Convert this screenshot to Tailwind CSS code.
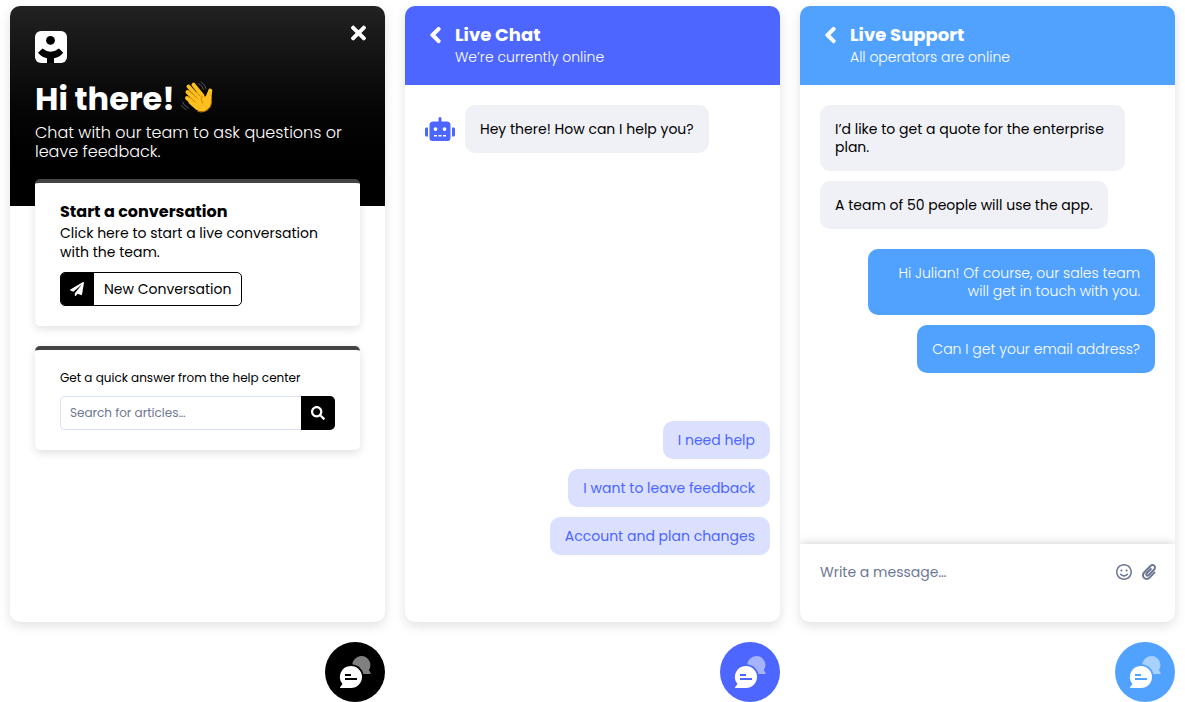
<!DOCTYPE html>
<html lang="en">
<head>
<meta charset="utf-8">
<meta name="viewport" content="width=device-width, initial-scale=1">
<title>Chat widgets</title>
<script src="https://cdn.jsdelivr.net/npm/@tailwindcss/browser@4"></script>
</head>
<body class="bg-white font-['Poppins','Inter',sans-serif] text-black">
<svg class="hidden" aria-hidden="true">
  <symbol id="chevron" viewBox="0 0 320 512"><path fill="currentColor" stroke="currentColor" stroke-width="34" stroke-linejoin="round" d="M34.52 239.03L228.87 44.69c9.37-9.37 24.57-9.37 33.94 0l22.67 22.67c9.36 9.36 9.37 24.52.04 33.9L131.49 256l154.02 154.75c9.34 9.38 9.32 24.54-.04 33.9l-22.67 22.67c-9.37 9.37-24.57 9.37-33.94 0L34.52 272.97c-9.37-9.37-9.37-24.57 0-33.94z"/></symbol>
  <symbol id="chat" viewBox="0 0 60 60">
    <path fill="#fff" fill-opacity=".5" d="M36.300 14a9 9 0 0 1 7.600 13.900l1.700 3.200c.2.500 0 .9-.5.900h-8.800a9 9 0 0 1 0-18z"/>
    <circle cx="26" cy="35" r="12.800" fill="currentColor"/>
    <path fill="#fff" d="M26 24a11 11 0 0 1 0 22H15.700c-.8 0-1-.6-.5-1.100l2.300-2.800A11 11 0 0 1 26 24z"/>
    <path stroke="currentColor" stroke-width="1.900" d="M20 33h6M20 37h12"/>
  </symbol>
</svg>
<main class="grid min-h-screen grid-cols-3 gap-5 px-2.5 pt-1.5">

  <div class="flex flex-col items-end gap-5">
    <section class="flex w-full flex-1 flex-col overflow-hidden rounded-[10px] bg-white shadow-[0_4px_12px_rgba(0,0,0,0.12)]">
      <header class="bg-linear-to-b from-[#222] to-black px-[25px] pt-[25px] pb-[45px] text-white">
        <div class="flex items-start justify-between">
          <svg class="size-8" viewBox="0 0 32 32" role="img" aria-label="Logo"><rect width="32" height="32" rx="6" fill="#fff"/><circle cx="15.500" cy="9.400" r="4.400" fill="#000"/><path fill="#000" d="M7.500 17.500Q15.500 24 24 17.500l4.200 4.300Q24.500 26.500 19 27.300V32h-7v-4.700Q7 26.500 3 21.800z"/></svg>
          <button type="button" aria-label="Close" class="-mt-1.5 -mr-1.5 flex h-4 w-4 items-center justify-center"><svg class="h-[22px] w-[15px] shrink-0" viewBox="0 0 352 512"><path fill="currentColor" d="M242.72 256l100.07-100.07c12.28-12.28 12.28-32.19 0-44.48l-22.24-22.24c-12.28-12.28-32.19-12.28-44.48 0L176 189.28 75.93 89.21c-12.28-12.28-32.19-12.28-44.48 0L9.21 111.45c-12.28 12.28-12.28 32.19 0 44.48L109.28 256 9.21 356.07c-12.28 12.28-12.28 32.19 0 44.48l22.24 22.24c12.28 12.28 32.2 12.28 44.48 0L176 322.72l100.07 100.07c12.28 12.28 32.2 12.28 44.48 0l22.24-22.24c12.28-12.28 12.28-32.19 0-44.48L242.72 256z"/></svg></button>
        </div>
        <h1 class="mt-[18px] flex h-9 items-center gap-1.5 text-[32px] leading-9 font-bold">Hi there!
          <svg class="mb-1 size-8" viewBox="0 0 32 32" role="img" aria-label="Waving hand">
            <g fill="none" stroke="#555" stroke-width="1" stroke-linecap="round"><path d="M17.500 2.500q4 1.500 5 6M20 1q4 2 5 6.500M1.500 21q1.500 4.500 6 6M.500 24.500q1.500 3 4.500 4"/></g>
            <g fill="none" stroke="#fcc11f" stroke-width="4" stroke-linecap="round"><path d="M6.500 11l9 9M7.500 5.500l10 11M12.500 3.700l9 11M6 17l9 8M29.300 9.500q-1.500 4-.8 8"/></g>
            <path fill="#fcbf1d" d="M9 17l8-8 6 6q1.500 1.500 2.300-1l2.200-5 3.700 1.500q-1 4-.7 9.500 0 5-3.700 8.300-6 4.500-12 .2L7.500 22z"/>
            <path fill="none" stroke="#c97a0a" stroke-width=".9" stroke-linecap="round" d="M8.500 9.500l7.500 7.700M12.500 8l6.500 7M7.500 15l6.500 6M21 15q-2 3 .5 7M17 30.500q7 2 11.500-3.500 2-3 2-7"/>
          </svg>
        </h1>
        <p class="mt-1.5 text-base leading-[19px] font-light">Chat with our team to ask questions or leave feedback.</p>
      </header>
      <div class="relative -mt-[27px] flex flex-col gap-5 px-[25px]">
        <article class="rounded-[5px] border-t-4 border-[#444] bg-white px-[25px] pt-[18px] pb-5 shadow-[0_3px_8px_rgba(0,0,0,0.12)]">
          <h2 class="text-base leading-[22px] font-bold">Start a conversation</h2>
          <p class="mt-px text-sm leading-[19px]">Click here to start a live conversation with the team.</p>
          <button type="button" class="mt-2.5 flex h-[34px] items-stretch overflow-hidden rounded-[5px] border border-black text-sm">
            <span class="flex w-[33px] items-center justify-center bg-black pr-0.5 text-white"><svg class="size-3.5" viewBox="0 0 512 512"><path fill="currentColor" d="M476 3.200L12.500 270.600c-18.100 10.400-15.800 35.600 2.200 43.200L121 358.400l287.300-253.200c5.500-4.900 13.300 2.600 8.600 8.300L176 407v80.500c0 23.600 28.500 32.900 42.500 15.800L282 426l124.600 52.200c14.200 6 30.400-2.900 33-18.200l72-432C515 7.800 493.300-6.800 476 3.200z"/></svg></span>
            <span class="flex items-center px-2.5">New Conversation</span>
          </button>
        </article>
        <article class="rounded-[5px] border-t-4 border-[#444] bg-white px-[25px] pt-[18px] pb-5 shadow-[0_3px_8px_rgba(0,0,0,0.12)]">
          <label for="q" class="block text-xs leading-5">Get a quick answer from the help center</label>
          <form class="mt-2 flex h-[34px]">
            <input id="q" type="search" placeholder="Search for articles…" class="min-w-0 flex-1 rounded-l-[5px] border border-r-0 border-[#dbe1fa] px-[9px] text-xs outline-none placeholder:text-[#6c7893]">
            <button type="button" aria-label="Search" class="flex w-[34px] items-center justify-center rounded-r-[5px] bg-black text-white"><svg class="size-3.5" viewBox="0 0 512 512"><path fill="currentColor" d="M505 442.700L405.300 343c-4.500-4.500-10.600-7-17-7H372c27.600-35.300 44-79.700 44-128C416 93.100 322.900 0 208 0S0 93.100 0 208s93.100 208 208 208c48.300 0 92.700-16.400 128-44v16.300c0 6.400 2.500 12.500 7 17l99.700 99.700c9.400 9.400 24.600 9.400 33.900 0l28.300-28.300c9.400-9.400 9.400-24.600.1-34zM208 336c-70.700 0-128-57.200-128-128 0-70.700 57.200-128 128-128 70.700 0 128 57.200 128 128 0 70.700-57.200 128-128 128z"/></svg></button>
          </form>
        </article>
      </div>
    </section>
    <button type="button" aria-label="Open chat" class="size-[60px] rounded-full bg-black text-black"><svg class="size-[60px]"><use href="#chat"/></svg></button>
  </div>

  <div class="flex flex-col items-end gap-5">
    <section class="flex w-full flex-1 flex-col overflow-hidden rounded-[10px] bg-white shadow-[0_4px_12px_rgba(0,0,0,0.12)]">
      <header class="flex gap-[13px] bg-[#4c66ff] px-6 pt-[18px] pb-[17px] text-white">
        <button type="button" aria-label="Back" class="flex h-[22px] w-[13px] items-center justify-center"><svg class="h-[18px] w-[13px] shrink-0"><use href="#chevron"/></svg></button>
        <div>
          <h2 class="text-lg leading-[22px] font-bold">Live Chat</h2>
          <p class="mt-px text-sm leading-[21px] font-light">We’re currently online</p>
        </div>
      </header>
      <div class="flex flex-1 flex-col justify-between pt-5 pr-2.5 pb-[67px] pl-5">
        <div class="flex items-center gap-2.5">
          <svg class="h-6 w-[30px] text-[#4c66ff]" viewBox="0 0 640 512" role="img" aria-label="Bot"><path fill="currentColor" d="M32,224H64V416H32A31.960,31.960,0,0,1,0,384V256A31.960,31.960,0,0,1,32,224Zm512-48V448a64.060,64.060,0,0,1-64,64H160a64.060,64.060,0,0,1-64-64V176a79.970,79.970,0,0,1,80-80H288V32a32,32,0,0,1,64,0V96H464A79.970,79.970,0,0,1,544,176ZM264,256a40,40,0,1,0-40,40A40,40,0,0,0,264,256Zm-8,128H192v32h64Zm96,0H288v32h64ZM456,256a40,40,0,1,0-40,40A40,40,0,0,0,456,256Zm-8,128H384v32h64ZM640,256V384a31.960,31.960,0,0,1-32,32H576V224h32A31.960,31.960,0,0,1,640,256Z"/></svg>
          <p class="rounded-[10px] bg-[#f0f1f6] p-[15px] text-sm leading-[18px]">Hey there! How can I help you?</p>
        </div>
        <div class="flex flex-col items-end gap-2.5 text-sm leading-[18px] text-[#4c66ff]">
          <button type="button" class="rounded-[10px] bg-[#dbe0ff] px-[15px] py-2.5">I need help</button>
          <button type="button" class="rounded-[10px] bg-[#dbe0ff] px-[15px] py-2.5">I want to leave feedback</button>
          <button type="button" class="rounded-[10px] bg-[#dbe0ff] px-[15px] py-2.5">Account and plan changes</button>
        </div>
      </div>
    </section>
    <button type="button" aria-label="Open chat" class="size-[60px] rounded-full bg-[#4c66ff] text-[#4c66ff]"><svg class="size-[60px]"><use href="#chat"/></svg></button>
  </div>

  <div class="flex flex-col items-end gap-5">
    <section class="flex w-full flex-1 flex-col overflow-hidden rounded-[10px] bg-white shadow-[0_4px_12px_rgba(0,0,0,0.12)]">
      <header class="flex gap-[13px] bg-[#51a2ff] px-6 pt-[18px] pb-[17px] text-white">
        <button type="button" aria-label="Back" class="flex h-[22px] w-[13px] items-center justify-center"><svg class="h-[18px] w-[13px] shrink-0"><use href="#chevron"/></svg></button>
        <div>
          <h2 class="text-lg leading-[22px] font-bold">Live Support</h2>
          <p class="mt-px text-sm leading-[21px] font-light">All operators are online</p>
        </div>
      </header>
      <div class="flex flex-1 flex-col gap-5 p-5 text-sm leading-[18px]">
        <div class="flex flex-col items-start gap-2.5">
          <p class="max-w-[305px] rounded-[10px] bg-[#f0f1f6] p-[15px]">I’d like to get a quote for the enterprise plan.</p>
          <p class="rounded-[10px] bg-[#f0f1f6] p-[15px]">A team of 50 people will use the app.</p>
        </div>
        <div class="flex flex-col items-end gap-2.5 text-right font-light text-white">
          <p class="max-w-[287px] rounded-[10px] bg-[#51a2ff] p-[15px]">Hi Julian! Of course, our sales team will get in touch with you.</p>
          <p class="rounded-[10px] bg-[#51a2ff] p-[15px]">Can I get your email address?</p>
        </div>
      </div>
      <form class="flex h-[78px] items-start gap-2.5 bg-white pt-[18px] pr-[19px] pl-5 text-[#6c7893] shadow-[0_0_10px_rgba(0,0,0,0.2)]">
        <input type="text" aria-label="Message" placeholder="Write a message…" class="h-5 min-w-0 flex-1 text-sm outline-none placeholder:text-[#6c7893]">
        <button type="button" aria-label="Emoji" class="flex h-5 items-center"><svg class="size-4" viewBox="0 8 496 496"><path fill="currentColor" d="M248 8C111 8 0 119 0 256s111 248 248 248 248-111 248-248S385 8 248 8zm0 448c-110.300 0-200-89.700-200-200S137.700 56 248 56s200 89.700 200 200-89.700 200-200 200zm-80-216c17.700 0 32-14.300 32-32s-14.300-32-32-32-32 14.300-32 32 14.300 32 32 32zm160 0c17.700 0 32-14.300 32-32s-14.300-32-32-32-32 14.300-32 32 14.300 32 32 32zm4 72.600c-20.800 25-51.500 39.400-84 39.400s-63.200-14.300-84-39.400c-8.500-10.200-23.700-11.500-33.800-3.100-10.200 8.500-11.500 23.600-3.100 33.800 30 36 74.100 56.600 120.900 56.600s90.900-20.600 120.900-56.600c8.500-10.200 7.100-25.300-3.100-33.800-10.100-8.400-25.300-7.100-33.800 3.100z"/></svg></button>
        <button type="button" aria-label="Attach file" class="flex h-5 items-center"><svg class="h-4 w-3.5" viewBox="0 0 448 512"><path fill="currentColor" d="M43.246 466.142c-58.430-60.289-57.341-157.511 1.386-217.581L254.392 34c44.316-45.332 116.351-45.336 160.671 0 43.890 44.894 43.943 117.329 0 162.276L232.214 383.128c-29.855 30.537-78.633 30.111-107.982-.998-28.275-29.970-27.368-77.473 1.452-106.953l143.743-146.835c6.182-6.314 16.312-6.422 22.626-.241l22.861 22.379c6.315 6.182 6.422 16.312.241 22.626L171.427 319.927c-4.932 5.045-5.236 13.428-.648 18.292 4.372 4.634 11.245 4.711 15.688.165l182.849-186.851c19.613-20.062 19.613-52.725-.011-72.798-19.189-19.627-49.957-19.637-69.154 0L90.390 293.295c-34.763 35.560-35.299 93.120-1.191 128.313 34.010 35.093 88.985 35.137 123.058.286l172.060-175.999c6.177-6.319 16.307-6.433 22.626-.256l22.877 22.364c6.319 6.177 6.434 16.307.256 22.626l-172.060 175.998c-59.576 60.938-155.943 60.216-214.770-.485z"/></svg></button>
      </form>
    </section>
    <button type="button" aria-label="Open chat" class="size-[60px] rounded-full bg-[#51a2ff] text-[#51a2ff]"><svg class="size-[60px]"><use href="#chat"/></svg></button>
  </div>

</main>
</body>
</html>
